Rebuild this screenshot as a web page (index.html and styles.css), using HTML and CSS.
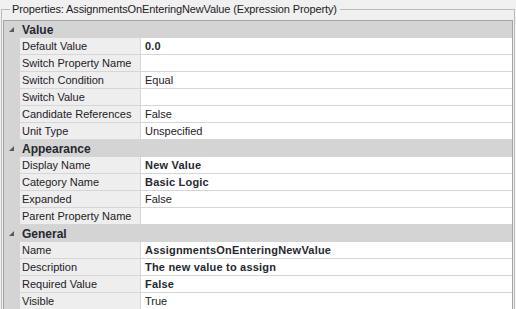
FILE: index.html
```html
<!DOCTYPE html>
<html lang="en">
<head>
    <meta charset="UTF-8">
    <link rel="stylesheet" href="styles.css">
    <title>Properties</title>
</head>
<body>
    <fieldset class="props">
        <legend>Properties: AssignmentsOnEnteringNewValue (Expression Property)</legend>
        <div class="grid">
            <div class="cat"><span class="toggle"></span>Value</div>
            <div class="row"><span class="name">Default Value</span><span class="val bold">0.0</span></div>
            <div class="row"><span class="name">Switch Property Name</span><span class="val"></span></div>
            <div class="row"><span class="name">Switch Condition</span><span class="val">Equal</span></div>
            <div class="row"><span class="name">Switch Value</span><span class="val"></span></div>
            <div class="row"><span class="name">Candidate References</span><span class="val">False</span></div>
            <div class="row"><span class="name">Unit Type</span><span class="val">Unspecified</span></div>

            <div class="cat"><span class="toggle"></span>Appearance</div>
            <div class="row"><span class="name">Display Name</span><span class="val bold">New Value</span></div>
            <div class="row"><span class="name">Category Name</span><span class="val bold">Basic Logic</span></div>
            <div class="row"><span class="name">Expanded</span><span class="val">False</span></div>
            <div class="row"><span class="name">Parent Property Name</span><span class="val"></span></div>

            <div class="cat"><span class="toggle"></span>General</div>
            <div class="row"><span class="name">Name</span><span class="val bold">AssignmentsOnEnteringNewValue</span></div>
            <div class="row"><span class="name">Description</span><span class="val bold">The new value to assign</span></div>
            <div class="row"><span class="name">Required Value</span><span class="val bold">False</span></div>
            <div class="row"><span class="name">Visible</span><span class="val">True</span></div>
        </div>
    </fieldset>
</body>
</html>
```

FILE: styles.css
```css
body {
    margin: 0;
    background-color: #f0f0f0;
    font-family: "Liberation Sans", Arial, sans-serif;
    font-size: 11px;
    color: #1e2026;
    height: 309px;
    overflow: hidden;
}

.props {
    margin: 0 0 0 1px;
    width: 514px;
    box-sizing: border-box;
    padding: 2px 1px 0 1px;
    border: 1px solid #bcbcbc;
    height: 320px;
}

.props legend {
    margin-left: 7px;
    padding: 0 3px 0 2px;
    line-height: 18px;
    letter-spacing: -0.13px;
    color: #1e2026;
}

.grid {
    border: 1px solid #a3a3a3;
    border-bottom: none;
    background-color: #d4d4d4;
}

.cat {
    display: flex;
    align-items: center;
    height: 17px;
    padding-left: 18px;
    position: relative;
    font-weight: bold;
    font-size: 12px;
    color: #262830;
}

.toggle {
    position: absolute;
    left: 5px;
    top: 6px;
    width: 0;
    height: 0;
    border-left: 5px solid transparent;
    border-bottom: 5px solid #5a5a5a;
}

.row {
    display: flex;
    height: 17px;
    padding-left: 16px;
}

.name {
    width: 118px;
    padding-left: 2px;
    background-color: #eeeeee;
    border-right: 1px solid #d6d6d6;
    border-bottom: 1px solid #d6d6d6;
    line-height: 16px;
    white-space: nowrap;
}

.val {
    flex: 1;
    padding-left: 4px;
    background-color: #fff;
    border-bottom: 1px solid #d6d6d6;
    line-height: 16px;
    white-space: nowrap;
}

.bold {
    font-weight: bold;
    letter-spacing: 0.2px;
    color: #262830;
}
```
